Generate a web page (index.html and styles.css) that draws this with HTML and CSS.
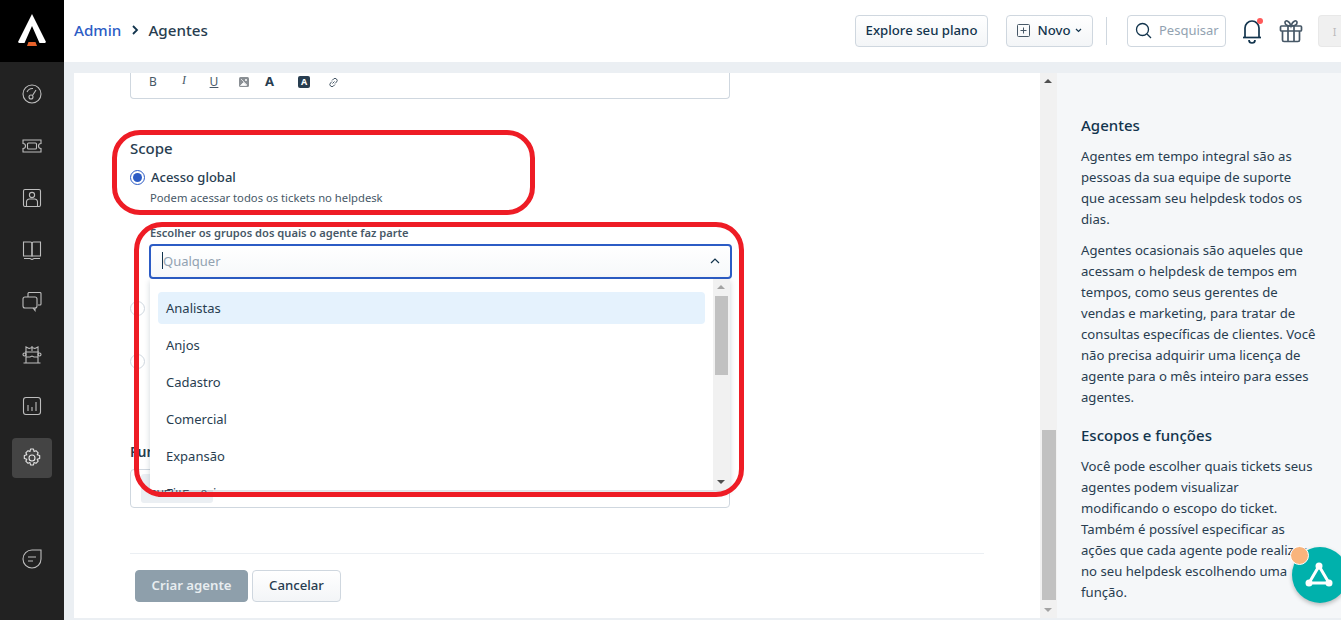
FILE: index.html
```html
<!DOCTYPE html>
<html lang="pt">
<head>
<meta charset="utf-8">
<title>Agentes</title>
<link rel="stylesheet" href="styles.css">
</head>
<body>
<div class="app">
  <aside class="sidebar">
    <div class="logo">
      <svg width="28" height="32" viewBox="0 0 28 32"><path d="M14 0 L28 28 L27 29 L21.500 29 L14 12 L6.500 29 L1 29 L0 28 Z" fill="#fff"/><path d="M10.500 28 L17.500 28 L19 32 L9 32 Z" fill="#e8622a"/></svg>
    </div>
    <nav class="nav">
      <a class="nav-item"><svg class="ni" viewBox="0 0 20 20"><circle cx="10" cy="10" r="9"/><circle cx="9" cy="13" r="2"/><path d="M10.500 11.500 L14 6"/><path d="M5 8a6 6 0 0 1 6-3.500"/></svg></a>
      <a class="nav-item"><svg class="ni" viewBox="0 0 20 20"><path d="M1 4h18v3.500a2.500 2.500 0 0 0 0 5V16H1v-3.500a2.500 2.500 0 0 0 0-5z"/><rect x="5.500" y="7" width="9" height="6" rx="1"/></svg></a>
      <a class="nav-item"><svg class="ni" viewBox="0 0 20 20"><rect x="1.500" y="1.500" width="17" height="17" rx="1.500"/><circle cx="10" cy="7" r="2.600"/><path d="M4.500 18v-4.500a3 3 0 0 1 3-2.500h5a3 3 0 0 1 3 2.500V18"/></svg></a>
      <a class="nav-item"><svg class="ni" viewBox="0 0 20 20"><path d="M1.500 2h7a1.500 1.500 0 0 1 1.500 1.500V16H1.500z"/><path d="M18.500 2h-7A1.500 1.500 0 0 0 10 3.500V16h8.500z"/><path d="M2 18.500h6l2 1 2-1h6"/></svg></a>
      <a class="nav-item"><svg class="ni" viewBox="0 0 20 20"><path d="M6 5V1.500a1 1 0 0 1 1-1h11a1 1 0 0 1 1 1V12a1 1 0 0 1-1 1h-2"/><rect x="1" y="5" width="14" height="11" rx="2"/><path d="M11 16l2 2.500V16"/></svg></a>
      <a class="nav-item"><svg class="ni" viewBox="0 0 20 20"><path d="M4 8V3l3 1.500a7 7 0 0 1 6 0L16 3v5"/><path d="M10 2v5"/><circle cx="2.500" cy="10.500" r="1.500"/><circle cx="17.500" cy="10.500" r="1.500"/><path d="M3 8h14M4 13h4l2-1 2 1h4"/><path d="M4 8v11M16 8v11M1.500 19h17"/></svg></a>
      <a class="nav-item"><svg class="ni" viewBox="0 0 20 20"><rect x="1.500" y="1.500" width="17" height="17" rx="2.500"/><path d="M6 9v6M10 11v4M14 6v9"/></svg></a>
      <a class="nav-item active"><svg class="ni" viewBox="0 0 20 20"><circle cx="10" cy="10" r="3"/><path d="M8.500 1h3l.5 2.500 2-.8 2.200 2.100-1 2 2.500.7v3l-2.500.7 1 2-2.200 2.100-2-.8-.5 2.500h-3l-.5-2.500-2 .8-2.200-2.100 1-2-2.500-.7v-3l2.500-.7-1-2 2.200-2.100 2 .8z" stroke-linejoin="round"/></svg></a>
    </nav>
    <a class="nav-item foot"><svg class="ni" viewBox="0 0 20 20"><path d="M19 1H10a9 9 0 1 0 9 9z"/><path d="M6 8h8M6 12h5"/></svg></a>
  </aside>
  <div class="main">
    <header class="topbar">
      <div class="crumbs"><a class="crumb-link">Admin</a><svg class="crumb-sep" width="8" height="10" viewBox="0 0 8 10"><path d="M2 1l4 4-4 4"/></svg><span class="crumb-now">Agentes</span></div>
      <div class="actions">
        <button class="btn explore">Explore seu plano</button>
        <button class="btn novo"><svg width="13" height="13" viewBox="0 0 13 13" class="plus"><rect x=".5" y=".5" width="12" height="12" rx="1"/><path d="M6.500 3.500v6M3.500 6.500h6"/></svg>Novo<svg width="7" height="5" viewBox="0 0 7 5" class="caret"><path d="M1 1l2.500 2.500L6 1"/></svg></button>
        <span class="divider"></span>
        <div class="search"><svg width="17" height="17" viewBox="0 0 17 17" class="lens"><circle cx="7.500" cy="7.500" r="6"/><path d="M12 12l4 4"/></svg><span>Pesquisar</span></div>
        <div class="bell"><svg width="22" height="26" viewBox="0 0 22 26" class="bell-ic"><path d="M4 19V10a7 7 0 0 1 14 0v9"/><path d="M2 19.500h18"/><path d="M8 22a3 3 0 0 0 6 0"/></svg><i class="dot"></i></div>
        <svg width="24" height="24" viewBox="0 0 24 24" class="gift"><rect x="1.500" y="7" width="21" height="5" rx="1"/><path d="M3.500 12v9a1.500 1.500 0 0 0 1.500 1.500h14a1.500 1.500 0 0 0 1.500-1.500v-9"/><path d="M9 7v15.500M15 7v15.500"/><path d="M12 7C9 7 6 6 6 3.500S10 1 12 7c2-6 6-6 6-3.500S15 7 12 7z"/></svg>
        <div class="avatar">I</div>
      </div>
    </header>
    <div class="content">
      <section class="form-pane">
        <div class="editor-bar">
          <span class="t tb">B</span><i class="t ti">I</i><u class="t tu">U</u>
          <svg class="t-img" width="10" height="10" viewBox="0 0 10 10"><rect width="10" height="10" rx="1.500" fill="#8a8f94"/><path d="M1.500 8.500l3-3 3 3zM2 2l6 6" fill="#fff" stroke="#fff" stroke-width=".7"/><circle cx="7" cy="3" r="1" fill="#fff"/></svg>
          <b class="t-a">A</b>
          <b class="t-ab">A</b>
          <svg class="t-link" width="11" height="11" viewBox="0 0 11 11"><path d="M4.500 6.500l2-2M4 3.500l1.500-1.500a2 2 0 0 1 3 3L7 6.500M7 7.500L5.500 9a2 2 0 0 1-3-3L4 4.500"/></svg>
        </div>
        <h4 class="scope-title">Scope</h4>
        <label class="radio-row"><span class="radio on"></span><span class="radio-label">Acesso global</span></label>
        <p class="radio-help">Podem acessar todos os tickets no helpdesk</p>
        <div class="group-field">
          <div class="group-label">Escolher os grupos dos quais o agente faz parte</div>
          <div class="select">
            <span class="cursor"></span><span class="placeholder">Qualquer</span>
            <svg class="up" width="10" height="6" viewBox="0 0 10 6"><path d="M1 5l4-4 4 4"/></svg>
          </div>
          <div class="dropdown">
            <ul class="options">
              <li class="opt current">Analistas</li>
              <li class="opt">Anjos</li>
              <li class="opt">Cadastro</li>
              <li class="opt">Comercial</li>
              <li class="opt">Expansão</li>
              <li class="opt">Financeiro</li>
            </ul>
            <div class="sb mini"><span class="arr up-a dim"></span><span class="thumb mini-thumb"></span><span class="arr dn-a"></span></div>
          </div>
        </div>
        <div class="radio-off-row"><span class="radio"></span></div>
        <div class="radio-off-row second"><span class="radio"></span></div>
        <h4 class="role-title">Funções</h4>
        <div class="role-box"><span class="tag">Agente <span class="x">×</span></span></div>
        <hr class="rule">
        <div class="form-actions">
          <button class="btn primary">Criar agente</button>
          <button class="btn cancel">Cancelar</button>
        </div>
        <div class="mark mark-a"></div>
        <div class="mark mark-b"></div>
      </section>
      <div class="sb page"><span class="arr up-a"></span><span class="thumb page-thumb"></span><span class="arr dn-a dim"></span></div>
      <aside class="help">
        <h3>Agentes</h3>
        <p>Agentes em tempo integral são as<br>pessoas da sua equipe de suporte<br>que acessam seu helpdesk todos os<br>dias.</p>
        <p>Agentes ocasionais são aqueles que<br>acessam o helpdesk de tempos em<br>tempos, como seus gerentes de<br>vendas e marketing, para tratar de<br>consultas específicas de clientes. Você<br>não precisa adquirir uma licença de<br>agente para o mês inteiro para esses<br>agentes.</p>
        <h3 class="second-h">Escopos e funções</h3>
        <p>Você pode escolher quais tickets seus<br>agentes podem visualizar<br>modificando o escopo do ticket.<br>Também é possível especificar as<br>ações que cada agente pode realizar<br>no seu helpdesk escolhendo uma<br>função.</p>
      </aside>
    </div>
  </div>
</div>
<div class="fab"><svg width="30" height="28" viewBox="0 0 30 28"><path d="M15 5L5 22h20z" fill="none" stroke="#fff" stroke-width="3"/><circle cx="15" cy="5" r="3.500" fill="#fff"/><circle cx="5" cy="22" r="3.500" fill="#fff"/><circle cx="25" cy="22" r="3.500" fill="#fff"/></svg></div>
<div class="fab-dot"></div>
</body>
</html>
```
FILE: styles.css
```css
* { box-sizing: border-box; }
html, body { margin: 0; height: 620px; overflow: hidden; }
body { font-family: "Noto Sans", "Open Sans", sans-serif; color: #12344d; font-size: 13px; }
button { font-family: inherit; }
h3, h4, p, ul { margin: 0; padding: 0; }
ul { list-style: none; }

.app { display: flex; height: 620px; }
.sidebar { width: 64px; flex: none; background: #222; display: flex; flex-direction: column; align-items: center; }
.logo { width: 64px; height: 62px; background: #000; display: flex; align-items: center; justify-content: center; flex: none; padding-bottom: 2px; }
.nav { display: flex; flex-direction: column; align-items: center; gap: 12px; padding-top: 12px; }
.nav-item { width: 40px; height: 40px; display: flex; align-items: center; justify-content: center; border-radius: 4px; }
.nav-item.active { background: #444; }
.nav-item.foot { margin-top: 61px; }
.ni { width: 20px; height: 20px; fill: none; stroke: #bdbdbd; stroke-width: 1.100; }
.active .ni { stroke: #e6e6e6; }

.main { flex: 1; min-width: 0; display: flex; flex-direction: column; background: #ebeff3; }
.topbar { height: 62px; flex: none; background: #fff; display: flex; align-items: center; justify-content: space-between; padding-left: 10px; }
.crumbs { display: flex; align-items: center; font-size: 15.200px; font-weight: 500; padding-bottom: 2px; }
.crumb-link { color: #2c5cc5; }
.crumb-sep { margin: 0 9px 0 10px; fill: none; stroke: #12344d; stroke-width: 1.800; }
.crumb-now { color: #283d50; }
.actions { display: flex; align-items: center; }
.btn { height: 32px; border: 1px solid #cfd7df; border-radius: 4px; background: linear-gradient(#fff, #f3f5f7); color: #12344d; font-size: 13.200px; font-weight: 500; padding: 0 0 2px; display: inline-flex; align-items: center; justify-content: center; }
.explore { width: 133px; }
.novo { width: 87px; margin-left: 18px; }
.plus { fill: none; stroke: #475867; margin-right: 7px; }
.caret { fill: none; stroke: #12344d; stroke-width: 1.200; margin-left: 4px; }
.divider { width: 1px; height: 28px; background: #cfd7df; margin: 0 20px 0 13px; }
.search { width: 99px; height: 32px; border: 1px solid #cfd7df; border-radius: 4px; display: flex; align-items: center; padding: 0 0 2px 7px; color: #92a2b1; font-size: 13px; }
.lens { fill: none; stroke: #12344d; stroke-width: 1.300; margin-right: 7px; flex: none; }
.bell { position: relative; width: 22px; height: 26px; margin-left: 15px; }
.bell-ic { fill: none; stroke: #12344d; stroke-width: 1.700; }
.dot { position: absolute; right: 0; top: 0; width: 6px; height: 6px; border-radius: 50%; background: #ff5a5a; }
.gift { fill: none; stroke: #475867; stroke-width: 1.700; margin-left: 16px; }
.avatar { width: 23px; height: 32px; margin-left: 15px; background: #f0f0f0; border: 1px solid #e8e8e8; border-right: 0; border-radius: 4px 0 0 4px; color: #bbb; font-size: 11px; display: flex; align-items: center; justify-content: center; padding-left: 9px; }

.content { flex: 1; min-height: 0; display: flex; padding: 11px 0 2px 10px; }
.form-pane { position: relative; flex: 1; min-width: 0; background: #fff; padding-left: 56px; overflow: hidden; }
.editor-bar { width: 600px; height: 26px; border: 1px solid #cfd7df; border-top: 0; border-radius: 0 0 4px 4px; color: #475867; font-size: 12px; position: relative; }
.editor-bar > * { position: absolute; top: 0; }
.t { font-weight: 400; width: 30px; text-align: center; left: 7px; }
.ti { left: 38px; font-family: "Liberation Serif", serif; }
.tu { left: 68px; }
.t-img { left: 108px; top: 4px; }
.t-a { left: 134px; font-size: 13px; color: #283d50; top: -1px; }
.t-ab { left: 167px; top: 3px; width: 12px; height: 12px; background: #283d50; color: #fff; border-radius: 2px; font-size: 9px; line-height: 12px; text-align: center; }
.t-link { left: 197px; top: 4px; fill: none; stroke: #475867; }

.scope-title { font-size: 15px; font-weight: 500; color: #283d50; margin-top: 38px; line-height: 22px; }
.radio-row { display: flex; align-items: center; margin-top: 8px; height: 20px; }
.radio { width: 15px; height: 15px; border-radius: 50%; border: 1px solid #cfd7df; background: #fff; flex: none; display: block; }
.radio.on { border-color: #2c5cc5; position: relative; }
.radio.on::after { content: ""; position: absolute; inset: 2px; border-radius: 50%; background: #2c5cc5; }
.radio-label { margin-left: 6px; font-weight: 500; color: #283d50; }
.radio-help { font-size: 11.250px; color: #475867; margin: 3px 0 0 20px; line-height: 16px; }
.group-field { position: relative; margin: 19px 0 0 19px; width: 583px; }
.group-label { font-size: 11.150px; font-weight: 600; color: #475867; line-height: 14px; padding: 1px 0 0 1px; }
.select { margin-top: 4px; height: 35px; border: 2px solid #2c5cc5; border-radius: 4px; display: flex; align-items: center; background: linear-gradient(#fff, #f6f8fa); padding: 0 0 2px 11px; position: relative; }
.cursor { width: 1px; height: 17px; background: #12344d; flex: none; }
.placeholder { color: #92a2b1; font-size: 13px; }
.up { position: absolute; right: 10px; top: 12px; fill: none; stroke: #12344d; stroke-width: 1.200; }
.dropdown { position: absolute; top: 54px; left: 1px; width: 580px; height: 211px; background: #fff; box-shadow: 0 2px 6px rgba(18,52,77,.2); display: flex; z-index: 2; overflow: hidden; }
.options { flex: 1; padding: 13px 8px 0; overflow: hidden; }
.opt { height: 32px; margin-bottom: 5px; padding-left: 8px; line-height: 32px; font-size: 13px; color: #283d50; border-radius: 4px; }
.opt.current { background: #e5f2fd; }
.sb { width: 17px; flex: none; background: #f1f1f1; display: flex; flex-direction: column; align-items: center; position: relative; }
.arr { width: 0; height: 0; border-left: 4px solid transparent; border-right: 4px solid transparent; position: absolute; left: 4px; }
.up-a { top: 6px; border-bottom: 4px solid #505050; }
.dn-a { bottom: 6px; border-top: 4px solid #505050; }
.up-a.dim { border-bottom-color: #a3a3a3; }
.dn-a.dim { border-top-color: #a3a3a3; }
.thumb { width: 14px; background: #c1c1c1; display: block; }
.mini-thumb { height: 79px; margin-top: 17px; width: 13px; }
.page-thumb { height: 170px; margin-top: 357px; }
.radio-off-row { margin-top: 22px; }
.radio-off-row.second { margin-top: 38px; }
.role-title { font-size: 14px; font-weight: 600; color: #283d50; margin-top: 73px; line-height: 20px; }
.role-box { width: 600px; height: 39px; margin-top: 7px; border: 1px solid #cfd7df; border-radius: 4px; padding: 4px 10px; }
.tag { display: inline-block; height: 29px; width: 72px; background: #ebeff3; border-radius: 3px; font-size: 12px; line-height: 32px; padding-left: 8px; color: #475867; }
.x { margin-left: 8px; }
.rule { width: 854px; height: 1px; margin: 45px 0 0; border: 0; background: #ebeff3; }
.form-actions { display: flex; gap: 4px; margin: 16px 0 0 5px; }
.primary { width: 113px; background: #8e9fab; border-color: #8e9fab; color: #e8edf0; font-weight: 600; }
.cancel { width: 89px; color: #283d50; }
.mark { position: absolute; border: 5px solid #ee1c25; z-index: 3; pointer-events: none; }
.mark-a { left: 38px; top: 57px; width: 423px; height: 85px; border-radius: 28px; }
.mark-b { left: 60px; top: 149px; width: 610px; height: 275px; border-radius: 28px; }

.help { width: 284px; flex: none; background: #f5f7f9; padding: 42px 0 0 24px; overflow: hidden; color: #283d50; }
.help h3 { font-size: 15px; font-weight: 500; line-height: 20px; margin-bottom: 11px; color: #12344d; }
.help p { font-size: 13.150px; line-height: 21px; margin-bottom: 10px; white-space: nowrap; }
.help .second-h { margin-top: 17px; }
.help .second-h + p { margin-top: 0; }

.fab { position: fixed; left: 1292px; top: 547px; width: 56px; height: 56px; border-radius: 50%; background: #00b1ac; box-shadow: 0 2px 4px rgba(0,0,0,.25); display: flex; align-items: center; justify-content: center; z-index: 5; padding-right: 2px; }
.fab-dot { position: fixed; left: 1290px; top: 546px; width: 19px; height: 19px; border-radius: 50%; background: #f9b47c; border: 1px solid #fff; z-index: 6; }
```
